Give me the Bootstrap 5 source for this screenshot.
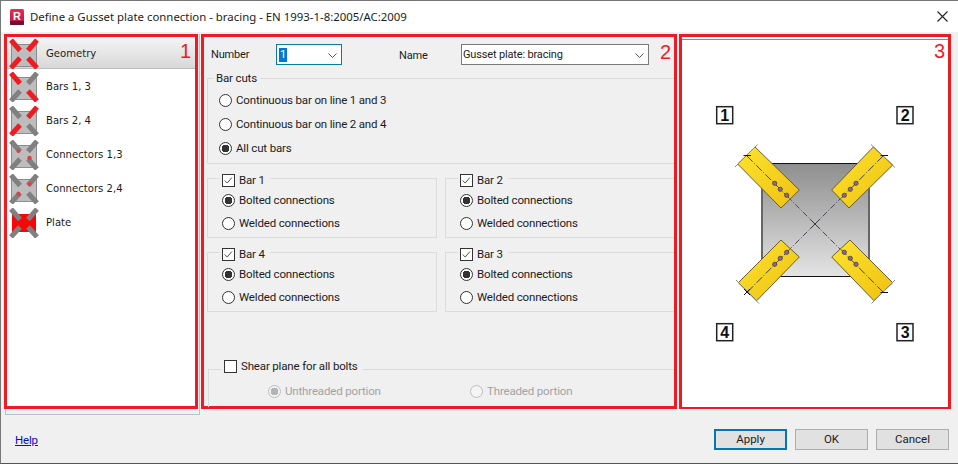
<!DOCTYPE html>
<html lang="en">
<head>
<meta charset="utf-8">
<title>Define a Gusset plate connection</title>
<link href="https://cdn.jsdelivr.net/npm/bootstrap@5.3.0/dist/css/bootstrap.min.css" rel="stylesheet">
<style>
html,body{margin:0;width:958px;height:464px;overflow:hidden;background:#f0f0f0}
body{font-family:Roboto,"Liberation Sans",sans-serif;font-size:11.5px;line-height:16px;color:#1c1c1c;letter-spacing:-.16px}
.dlg-win{width:958px;height:464px;border-top:1px solid #777;border-left:1px solid #777;border-bottom:1px solid #555;background:#f0f0f0}
.dlg-title{height:31px;background:#fff;padding-left:9px;padding-right:10px}
.dlg-title-text{margin-left:6px;flex:1;font-family:"Noto Sans",sans-serif;font-size:11.4px;letter-spacing:0}
.dlg-main{padding-left:3px;margin-top:2px}
.dlg-listbox{width:195px;height:381px;margin-left:1px;border:1px solid #b8c0cc;border-top:0;flex:none}
.dlg-panel{border:3px solid #ed1c24;height:375px;flex:none}
.dlg-panel-one{width:194px;margin-left:-2px;background:#fff}
.dlg-panel-two{width:476px;margin-left:1px}
.dlg-panel-three{width:272px;margin-left:2px;background:#fff}
.dlg-tag{position:absolute;z-index:3;color:#ed1c24;font-family:"Liberation Sans",sans-serif;font-size:20px;line-height:20px;top:4px;right:4px;letter-spacing:0}
.dlg-tag-two{right:3px;top:5px}
.dlg-tag-three{right:3px;top:4px}
.dlg-item.list-group-item{height:34px;border:0;padding:2px 0 0 2px;background:transparent;display:flex;align-items:center;gap:6px;font-family:"DejaVu Sans",sans-serif;font-size:10.1px;letter-spacing:0;color:#1c1c1c;border-radius:0}
.dlg-item.dlg-item-on{height:32px;background:linear-gradient(#f5f5f5,#d8d8d8);border-bottom:1px solid #bbb}
.dlg-item svg{flex:none}
.dlg-head{padding-top:7px;height:28px}
.dlg-num-label{margin-left:7px;width:65px;padding-top:3px;font-size:11px}
.dlg-name-label{margin-left:57px;width:62px;padding-top:4px;font-size:11px}
.form-select.dlg-combo{height:21px;padding:0 0 0 1px;font-size:11px;line-height:19px;border-radius:0;border:1px solid #7a7a7a;color:#1c1c1c;background-image:none;background-color:#fff;position:relative}
.dlg-combo-a.form-select{width:66px;border-color:#0a7c9e}
.dlg-combo-b.form-select{width:188px}
.dlg-combo svg{position:absolute;right:4px;top:8px}
.dlg-sel{background:#0078d7;color:#fff;padding:0 1px;display:inline-block;line-height:14px;margin-left:1px}
.dlg-group{border:1px solid #dcdcdc;}
.dlg-group legend{float:none;width:auto;font-size:11.5px;line-height:16px;margin:0;padding:0}
.dlg-cuts{margin:5px 0 0 3px;height:94px;border-right:0}
.dlg-cuts legend{margin-left:5px;padding:0 3px}
.dlg-cuts-body{padding:2px 0 0 11px}
.dlg-cuts-row{height:24px;gap:4px}
.dlg-bars{display:grid;grid-template-columns:230px 229px;column-gap:8px;row-gap:4px;margin:4px 0 0 3px}
.dlg-bar{height:70px}
.dlg-bar-open{border-right:0}
.dlg-bar legend{margin-left:12px;padding:4px 5px 0 2px}
.dlg-legend-in{gap:4px;height:16px}
.dlg-bar-body{padding:1px 0 0 14px}
.dlg-bar-row{height:23px;gap:4px;padding-bottom:2px}
.dlg-shear{margin:46px 0 0 4px;height:49px;border-right:0;border-bottom:0}
.dlg-shear legend{margin-left:13px;padding:0 5px 6px 2px}
.dlg-shear-body{padding-left:59px}
.dlg-shear-row{height:22px;gap:4px;color:#a2a2a2;width:202px}
.form-check-input.dlg-tick{width:13px;height:13px;margin:0;flex:none;border:1px solid #333;background-color:#fff;opacity:1;box-shadow:none}
.dlg-bar-row .form-check-input.dlg-tick{margin-top:2px}
.form-check-input.dlg-tick:checked[type=radio]{background-color:#fff;border-color:#333;background-image:radial-gradient(circle,#333 0,#333 3.6px,transparent 4px)}
.form-check-input.dlg-tick[type=checkbox]{border-radius:0}
.form-check-input.dlg-tick:checked[type=checkbox]{background-color:#fff;border-color:#333;background-size:100% 100%;background-image:url("data:image/svg+xml,%3Csvg xmlns='http://www.w3.org/2000/svg' viewBox='0 0 13 13'%3E%3Cpath d='M2 6.5 5 9.5 10.500 3' fill='none' stroke='%23444' stroke-width='1.100'/%3E%3C/svg%3E")}
.form-check-input.dlg-tick:disabled{opacity:1;border-color:#bcbcbc;background-color:#f4f4f4}
.form-check-input.dlg-tick:checked:disabled[type=radio]{border-color:#bcbcbc;background-color:#f4f4f4;background-image:radial-gradient(circle,#b4b4b4 0,#b4b4b4 3.6px,transparent 4px)}
.dlg-view{margin-top:2px;border-top:1px solid #8a8a8a;background:#fff}
.dlg-view svg{display:block}
.dlg-foot{margin-top:14px;padding-left:14px;padding-right:9px}
.dlg-help{color:#0a0ac8;text-decoration:underline}
.btn.dlg-btn{width:73px;height:21px;padding:0;font-size:11.5px;line-height:19px;border:1px solid #adadad;border-radius:0;background:#e1e1e1;color:#1c1c1c}
.btn.dlg-btn-main{border:2px solid #0078b4;line-height:17px}
.dlg-btns{gap:8px}
</style>
</head>
<body>
<svg width="0" height="0" class="d-block" style="position:absolute" aria-hidden="true">
<defs>
<g id="ico-sq"><rect x="2.500" y="5.500" width="25" height="22" fill="#bdbdbd" stroke="#8c8c8c"/></g>
<path id="arm-tl" d="M2 1 11 11.500" stroke-width="5" fill="none"/>
<path id="arm-tr" d="M28 1 19 11.500" stroke-width="5" fill="none"/>
<path id="arm-bl" d="M2 29 11 19" stroke-width="5" fill="none"/>
<path id="arm-br" d="M28 29 19 19" stroke-width="5" fill="none"/>
</defs>
</svg>
<div class="dlg-win d-flex flex-column">
  <div class="dlg-title d-flex align-items-center">
    <svg width="14" height="16" viewBox="0 0 14 16">
      <defs><linearGradient id="rv" x1="0" y1="0" x2="0" y2="1"><stop offset="0" stop-color="#ef2a55"/><stop offset="1" stop-color="#b01848"/></linearGradient></defs>
      <rect x="0" y="0" width="14" height="16" rx="1.500" fill="url(#rv)"/>
      <rect x="0" y="12" width="14" height="4" rx="1" fill="#6e1030"/>
      <text x="7" y="10.500" text-anchor="middle" font-family="Liberation Sans" font-weight="700" font-size="11" fill="#fff">R</text>
    </svg>
    <span class="dlg-title-text">Define a Gusset plate connection - bracing  - EN 1993-1-8:2005/AC:2009</span>
    <svg width="11" height="11" viewBox="0 0 11 11"><path d="M.5.5 10.500 10.500M10.500.5.5 10.500" stroke="#222" stroke-width="1.100"/></svg>
  </div>

  <div class="dlg-main d-flex align-items-start">
    <div class="dlg-listbox">
      <div class="dlg-panel dlg-panel-one position-relative">
        <span class="dlg-tag">1</span>
        <div class="list-group list-group-flush">
          <div class="list-group-item dlg-item dlg-item-on">
            <svg width="31" height="30" viewBox="0 0 31 30"><use href="#ico-sq"/><g stroke="#ed1c24"><use href="#arm-tl"/><use href="#arm-tr"/><use href="#arm-bl"/><use href="#arm-br"/></g></svg>
            Geometry</div>
          <div class="list-group-item dlg-item">
            <svg width="31" height="30" viewBox="0 0 31 30"><use href="#ico-sq"/><g stroke="#808080"><use href="#arm-tr"/><use href="#arm-bl"/></g><g stroke="#ed1c24"><use href="#arm-tl"/><use href="#arm-br"/></g></svg>
            Bars 1, 3</div>
          <div class="list-group-item dlg-item">
            <svg width="31" height="30" viewBox="0 0 31 30"><use href="#ico-sq"/><g stroke="#808080"><use href="#arm-tl"/><use href="#arm-br"/></g><g stroke="#ed1c24"><use href="#arm-tr"/><use href="#arm-bl"/></g></svg>
            Bars 2, 4</div>
          <div class="list-group-item dlg-item">
            <svg width="31" height="30" viewBox="0 0 31 30"><use href="#ico-sq"/><g stroke="#808080"><use href="#arm-tl"/><use href="#arm-tr"/><use href="#arm-bl"/><use href="#arm-br"/></g><circle cx="9.500" cy="11" r="2" fill="#d8404a"/><circle cx="20.500" cy="18" r="2.200" fill="#d8404a"/></svg>
            Connectors 1,3</div>
          <div class="list-group-item dlg-item">
            <svg width="31" height="30" viewBox="0 0 31 30"><use href="#ico-sq"/><g stroke="#808080"><use href="#arm-tl"/><use href="#arm-tr"/><use href="#arm-bl"/><use href="#arm-br"/></g><circle cx="20.500" cy="10" r="2" fill="#d8404a"/><circle cx="9.500" cy="20" r="2.200" fill="#d8404a"/></svg>
            Connectors 2,4</div>
          <div class="list-group-item dlg-item">
            <svg width="31" height="30" viewBox="0 0 31 30"><rect x="3" y="6" width="24" height="18" fill="#f50808"/><g stroke="#808080"><use href="#arm-tl"/><use href="#arm-tr"/><use href="#arm-bl"/><use href="#arm-br"/></g></svg>
            Plate</div>
        </div>
      </div>
    </div>

    <div class="dlg-panel dlg-panel-two position-relative">
      <span class="dlg-tag dlg-tag-two">2</span>
      <div class="dlg-head d-flex align-items-start">
        <span class="dlg-num-label">Number</span>
        <div class="form-select dlg-combo dlg-combo-a"><span class="dlg-sel">1</span><svg width="9" height="5" viewBox="0 0 9 5"><path d="M.5.5 4.500 4.500 8.500.5" fill="none" stroke="#555"/></svg></div>
        <span class="dlg-name-label">Name</span>
        <div class="form-select dlg-combo dlg-combo-b">Gusset plate: bracing<svg width="9" height="5" viewBox="0 0 9 5"><path d="M.5.5 4.500 4.500 8.500.5" fill="none" stroke="#555"/></svg></div>
      </div>

      <fieldset class="dlg-group dlg-cuts">
        <legend>Bar cuts</legend>
        <div class="dlg-cuts-body">
          <label class="dlg-cuts-row d-flex align-items-center"><input class="form-check-input dlg-tick" type="radio" name="cut">Continuous bar on line 1 and 3</label>
          <label class="dlg-cuts-row d-flex align-items-center"><input class="form-check-input dlg-tick" type="radio" name="cut">Continuous bar on line 2 and 4</label>
          <label class="dlg-cuts-row d-flex align-items-center"><input class="form-check-input dlg-tick" type="radio" name="cut" checked>All cut bars</label>
        </div>
      </fieldset>

      <div class="dlg-bars">
        <fieldset class="dlg-group dlg-bar">
          <legend><span class="dlg-legend-in d-flex align-items-center"><input class="form-check-input dlg-tick" type="checkbox" checked>Bar 1</span></legend>
          <div class="dlg-bar-body">
            <label class="dlg-bar-row d-flex align-items-center"><input class="form-check-input dlg-tick" type="radio" name="b1" checked>Bolted connections</label>
            <label class="dlg-bar-row d-flex align-items-center"><input class="form-check-input dlg-tick" type="radio" name="b1">Welded connections</label>
          </div>
        </fieldset>
        <fieldset class="dlg-group dlg-bar dlg-bar-open">
          <legend><span class="dlg-legend-in d-flex align-items-center"><input class="form-check-input dlg-tick" type="checkbox" checked>Bar 2</span></legend>
          <div class="dlg-bar-body">
            <label class="dlg-bar-row d-flex align-items-center"><input class="form-check-input dlg-tick" type="radio" name="b2" checked>Bolted connections</label>
            <label class="dlg-bar-row d-flex align-items-center"><input class="form-check-input dlg-tick" type="radio" name="b2">Welded connections</label>
          </div>
        </fieldset>
        <fieldset class="dlg-group dlg-bar">
          <legend><span class="dlg-legend-in d-flex align-items-center"><input class="form-check-input dlg-tick" type="checkbox" checked>Bar 4</span></legend>
          <div class="dlg-bar-body">
            <label class="dlg-bar-row d-flex align-items-center"><input class="form-check-input dlg-tick" type="radio" name="b4" checked>Bolted connections</label>
            <label class="dlg-bar-row d-flex align-items-center"><input class="form-check-input dlg-tick" type="radio" name="b4">Welded connections</label>
          </div>
        </fieldset>
        <fieldset class="dlg-group dlg-bar dlg-bar-open">
          <legend><span class="dlg-legend-in d-flex align-items-center"><input class="form-check-input dlg-tick" type="checkbox" checked>Bar 3</span></legend>
          <div class="dlg-bar-body">
            <label class="dlg-bar-row d-flex align-items-center"><input class="form-check-input dlg-tick" type="radio" name="b3" checked>Bolted connections</label>
            <label class="dlg-bar-row d-flex align-items-center"><input class="form-check-input dlg-tick" type="radio" name="b3">Welded connections</label>
          </div>
        </fieldset>
      </div>

      <fieldset class="dlg-group dlg-shear">
        <legend><span class="dlg-legend-in d-flex align-items-center"><input class="form-check-input dlg-tick" type="checkbox">Shear plane for all bolts</span></legend>
        <div class="dlg-shear-body d-flex">
          <label class="dlg-shear-row d-flex align-items-center"><input class="form-check-input dlg-tick" type="radio" name="sh" checked disabled>Unthreaded portion</label>
          <label class="dlg-shear-row d-flex align-items-center"><input class="form-check-input dlg-tick" type="radio" name="sh" disabled>Threaded portion</label>
        </div>
      </fieldset>
    </div>

    <div class="dlg-panel dlg-panel-three position-relative">
      <span class="dlg-tag dlg-tag-three">3</span>
      <div class="dlg-view">
        <svg width="267" height="367" viewBox="682 40 267 367">
          <defs>
            <linearGradient id="pl" x1="0" y1="0" x2="0" y2="1"><stop offset="0" stop-color="#8e8e8e"/><stop offset="1" stop-color="#e4e4e4"/></linearGradient>
            <linearGradient id="yl" x1="0" y1="0" x2="1" y2="1"><stop offset="0" stop-color="#fbe430"/><stop offset="1" stop-color="#f0c010"/></linearGradient>
          </defs>
          <rect x="762" y="163.500" width="107" height="113" fill="url(#pl)"/>
          <path d="M762 163.500H869M762 276.500H869" stroke="#111" stroke-width="1"/>
          <path d="M762 163.500V276.500M869 163.500V276.500" stroke="#666" stroke-width="2"/>
          <path d="M815 224 790 199M815 224 840 199M815 224 790 249M815 224 840 249" stroke="#4a4a5a" stroke-width="1" stroke-dasharray="6 2 1 2"/>
          <path d="M810 219 820 229M820 219 810 229" stroke="#333" stroke-width=".8"/>
          <g fill="url(#yl)" stroke="#6a5e30" stroke-width="1">
            <polygon points="755,147 799.300,190 781,208 737.700,164"/>
            <polygon points="873.300,147 892.700,165 849,208 831.700,190"/>
            <polygon points="781,240 799.300,257 756.700,300.700 738.300,282.700"/>
            <polygon points="850,240 831.700,257 874,300.700 892.700,282.700"/>
          </g>
          <path d="M757.500 144.500 735 167M871 144.500 895 167.500M736 280 759 303.500M895 280 871.500 303.500" stroke="#8a8a78" stroke-width="1" fill="none"/>
          <g stroke="#444" stroke-width="1" fill="none" stroke-dasharray="8 2 1 2">
            <path d="M747 156 790 199M883 156 840.500 199M747.500 292 790 249M883 292 840.500 249"/>
          </g>
          <path d="M743.500 155.500H751M880.500 155.500H888M880.500 292.500H888M744 289 750 295M750 289 744 295" stroke="#111" stroke-width="1"/>
          <g fill="#8a6a9a" stroke="#4a3a40" stroke-width=".8">
            <circle cx="774.700" cy="183.300" r="2.100"/><circle cx="780.300" cy="189.300" r="2.100"/><circle cx="786.700" cy="195.300" r="2.100"/>
            <circle cx="856" cy="183.300" r="2.100"/><circle cx="850.300" cy="189.300" r="2.100"/><circle cx="844.300" cy="195.300" r="2.100"/>
            <circle cx="774.700" cy="264.300" r="2.100"/><circle cx="780.300" cy="258.300" r="2.100"/><circle cx="786.700" cy="252.300" r="2.100"/>
            <circle cx="856" cy="264.300" r="2.100"/><circle cx="850.300" cy="258.300" r="2.100"/><circle cx="844.300" cy="252.300" r="2.100"/>
          </g>
          <g fill="#fff" stroke="#222" stroke-width="1.500">
            <rect x="716.700" y="106.700" width="16" height="17"/>
            <rect x="897" y="106.700" width="16" height="17"/>
            <rect x="716.700" y="323.700" width="16" height="17"/>
            <rect x="897" y="323.700" width="16" height="17"/>
          </g>
          <g font-family="Liberation Sans" font-weight="700" font-size="16" text-anchor="middle" fill="#111">
            <text x="724.700" y="121">1</text>
            <text x="905" y="121">2</text>
            <text x="724.700" y="338">4</text>
            <text x="905" y="338">3</text>
          </g>
        </svg>
      </div>
    </div>
  </div>

  <div class="dlg-foot d-flex align-items-center justify-content-between">
    <a class="dlg-help" href="#">Help</a>
    <div class="dlg-btns d-flex">
      <button type="button" class="btn dlg-btn dlg-btn-main">Apply</button>
      <button type="button" class="btn dlg-btn">OK</button>
      <button type="button" class="btn dlg-btn">Cancel</button>
    </div>
  </div>
</div>
</body>
</html>
